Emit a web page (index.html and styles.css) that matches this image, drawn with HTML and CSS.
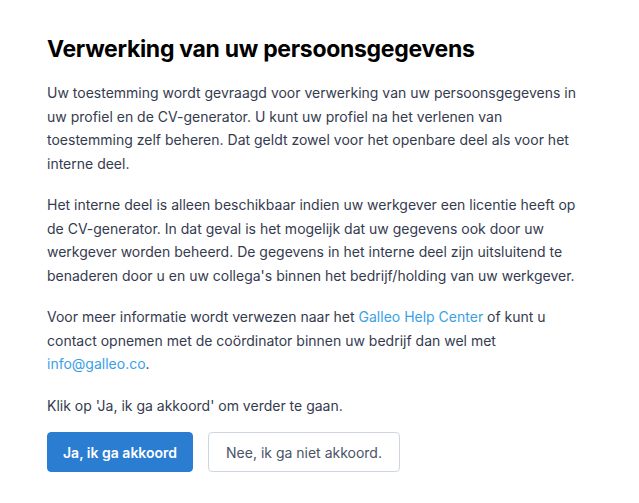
FILE: index.html
```html
<!DOCTYPE html>
<html lang="nl">
<head>
  <meta charset="UTF-8" />
  <meta name="viewport" content="width=device-width, initial-scale=1.0"/>
  <title>Verwerking van uw persoonsgegevens</title>
  <link rel="stylesheet" href="styles.css">
</head>
<body>

  <div class="modal">
    <h1 class="title">Verwerking van uw persoonsgegevens</h1>

    <p>Uw toestemming wordt gevraagd voor verwerking van uw persoonsgegevens in uw profiel en de CV-generator. U kunt uw profiel na het verlenen van toestemming zelf beheren. Dat geldt zowel voor het openbare deel als voor het interne deel.</p>

    <p>Het interne deel is alleen beschikbaar indien uw werkgever een licentie heeft op de CV-generator. In dat geval is het mogelijk dat uw gegevens ook door uw werkgever worden beheerd. De gegevens in het interne deel zijn uitsluitend te benaderen door u en uw collega's binnen het bedrijf/holding van uw werkgever.</p>

    <p>Voor meer informatie wordt verwezen naar het <a href="#">Galleo Help Center</a> of kunt u contact opnemen met de coördinator binnen uw bedrijf dan wel met <a href="#">info@galleo.co</a>.</p>

    <p class="hint">Klik op 'Ja, ik ga akkoord' om verder te gaan.</p>

    <div class="actions">
      <button class="btn btn-primary">Ja, ik ga akkoord</button>
      <button class="btn btn-outline">Nee, ik ga niet akkoord.</button>
    </div>
  </div>

</body>
</html>
```

FILE: styles.css
```css
body {
  margin: 0;
  background: #fff;
  font-family: Inter, 'Noto Sans', sans-serif;
  color: #353b4f;
}

.modal {
  width: 538px;
  padding: 30px 47px 32px;
}

.title {
  font-size: 23px;
  font-weight: 700;
  color: #000;
  margin: 5px 0 18px;
  letter-spacing: -0.3px;
}

p {
  font-size: 14px;
  line-height: 23.5px;
  margin: 0 0 18px;
}

p.hint {
  margin-bottom: 15px;
}

a {
  color: #3b9fe6;
  text-decoration: none;
}

.actions {
  display: flex;
  gap: 15px;
}

.btn {
  font-family: Inter, 'Noto Sans', sans-serif;
  font-size: 14px;
  height: 40px;
  border-radius: 4px;
  cursor: pointer;
}

.btn-primary {
  padding: 0 15px;
  background: #2b7dd1;
  border: 1px solid #2b7dd1;
  color: #fff;
  font-weight: 600;
}

.btn-outline {
  padding: 0 17px;
  background: #fff;
  border: 1px solid #cdd6e2;
  color: #4a5368;
}
```
